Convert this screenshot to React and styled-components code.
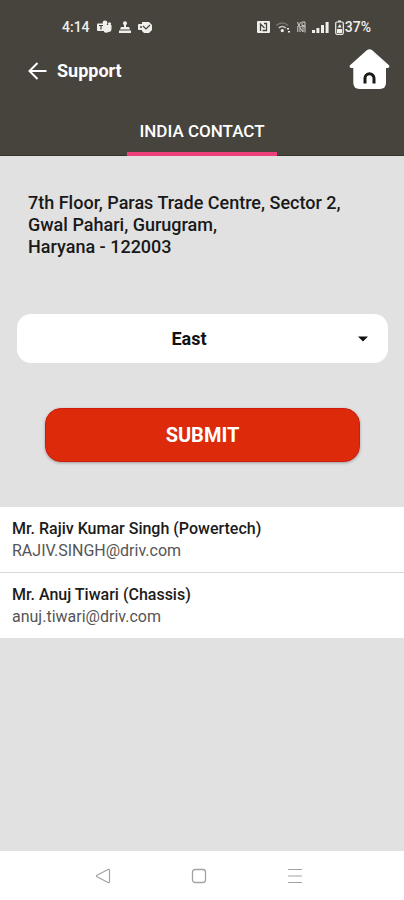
import React, { Component } from "react";
import styled, { createGlobalStyle } from "styled-components";

const GlobalStyle = createGlobalStyle`
  * {
    box-sizing: border-box;
  }
  body {
    margin: 0;
    background-color: #e1e1e1;
    font-family: Roboto, "Liberation Sans", sans-serif;
  }
`;

const Screen = styled.div`
  display: flex;
  flex-direction: column;
  min-height: 100vh;
`;

const Header = styled.header`
  background-color: #47443d;
  color: #ffffff;
`;

const StatusBar = styled.div`
  display: flex;
  align-items: center;
  justify-content: space-between;
  padding: 17px 33px 0 62px;
  font-size: 14px;
  font-weight: 500;
  line-height: 20px;
  color: #f0efec;
`;

const StatusGroup = styled.div`
  display: flex;
  align-items: center;
  gap: ${({ gap }) => gap}px;

  svg {
    display: block;
  }
`;

const Toolbar = styled.div`
  display: flex;
  align-items: center;
  justify-content: space-between;
  height: 68px;
  padding: 0 14px 0 27px;
`;

const TitleGroup = styled.div`
  display: flex;
  align-items: center;
  gap: 9px;
`;

const Title = styled.h1`
  margin: 0;
  font-size: 18px;
  font-weight: 700;
  line-height: 24px;
`;

const IconButton = styled.button`
  display: block;
  padding: 0;
  border: 0;
  background: none;
  color: inherit;
  cursor: pointer;

  svg {
    display: block;
  }
`;

const Tabs = styled.nav`
  display: flex;
  justify-content: center;
  border-bottom: 1px solid #35332e;
`;

const Tab = styled.button`
  width: 150px;
  height: 51px;
  margin-bottom: -1px;
  padding: 4px 0 0;
  border: 0;
  border-bottom: 4px solid #ee3f7a;
  background: none;
  color: #ffffff;
  font: 500 17px/20px Roboto, "Liberation Sans", sans-serif;
  cursor: pointer;
`;

const Main = styled.main`
  flex: 1;
`;

const Address = styled.address`
  padding: 36px 28px 0;
  color: #191919;
  font-size: 18px;
  font-style: normal;
  font-weight: 500;
  line-height: 22px;
`;

const Form = styled.form`
  display: flex;
  flex-direction: column;
  gap: 45px;
  padding: 56px 16px 45px 17px;
`;

const SelectField = styled.label`
  display: grid;
  align-items: center;

  > * {
    grid-area: 1 / 1;
  }

  svg {
    justify-self: end;
    margin-right: 20px;
    pointer-events: none;
  }
`;

const Select = styled.select`
  appearance: none;
  width: 100%;
  height: 49px;
  padding: 0 27px 0 0;
  border: 0;
  border-radius: 14px;
  background-color: #ffffff;
  color: #111111;
  font: 700 18px/24px Roboto, "Liberation Sans", sans-serif;
  text-align: center;
  text-align-last: center;
`;

const SubmitButton = styled.button`
  height: 54px;
  margin: 0 28px;
  border: 1px solid #d01c0e;
  border-radius: 16px;
  background-color: #dc2a0a;
  box-shadow: 0 1px 3px rgba(0, 0, 0, 0.3);
  color: #ffffff;
  font: 700 20px/24px Roboto, "Liberation Sans", sans-serif;
  cursor: pointer;
`;

const ContactList = styled.ul`
  margin: 0;
  padding: 0;
  list-style: none;
  background-color: #ffffff;
`;

const ContactItem = styled.li`
  padding: 11px 12px 10px;
  font-size: 16px;
  line-height: 22px;

  & + & {
    border-top: 1px solid #d9d9d9;
  }
`;

const ContactName = styled.div`
  color: #1b1b1b;
  font-weight: 500;
`;

const ContactMail = styled.a`
  display: block;
  color: #555555;
  text-decoration: none;
`;

const NavBar = styled.nav`
  display: flex;
  align-items: center;
  justify-content: center;
  gap: 80px;
  height: 49px;
  padding-right: 6px;
  background-color: #ffffff;
  color: #a3a3a3;
`;

const TeamsIcon = () => (
  <svg width="15" height="14" viewBox="0 0 15 14" fill="currentColor">
    <circle cx="8" cy="3" r="2.4" />
    <circle cx="12.5" cy="3.8" r="1.6" />
    <path d="M7 5h7.5v4a3 3 0 0 1-3 3A4 4 0 0 1 7 12z" />
    <rect x="0" y="3.5" width="8" height="7.5" rx="1" />
    <path d="M2 5.5h4M4 5.5v4" stroke="#47443d" strokeWidth="1.2" />
  </svg>
);

const StampIcon = () => (
  <svg width="12" height="12" viewBox="0 0 12 12" fill="currentColor">
    <circle cx="6" cy="2.2" r="2" />
    <path d="M5 3h2v3h3l1 2.5H1L2 6h3zM0 9.5h12V12H0z" />
  </svg>
);

const MailCheckIcon = () => (
  <svg width="14" height="12" viewBox="0 0 14 12" fill="currentColor">
    <path d="M4 1h7l3 3v5l-3 3H6L4 10z" />
    <rect x="0" y="3" width="7" height="6" rx="1" />
    <path d="M5 5l3 3 4-4" fill="none" stroke="#47443d" strokeWidth="1.2" />
    <circle cx="3" cy="6" r="1.2" fill="#77746d" />
  </svg>
);

const NfcIcon = () => (
  <svg width="13" height="12" viewBox="0 0 13 12">
    <rect width="13" height="12" rx="1" fill="currentColor" />
    <path
      d="M3.5 10V3l4 4M5.5 9.5h4v-7H7"
      fill="none"
      stroke="#47443d"
      strokeWidth="1.3"
    />
  </svg>
);

const WifiIcon = () => (
  <svg width="15" height="12" viewBox="0 0 15 12">
    <g fill="none" strokeWidth="1.6">
      <path d="M0.5 4.5a8 8 0 0 1 11.5 0" stroke="#77746d" />
      <path d="M2.8 7a5 5 0 0 1 7 0" stroke="#c9c7c2" />
    </g>
    <circle cx="6.3" cy="9.6" r="1.6" fill="currentColor" />
    <path d="M11 7h2v1.5h-2zM12 10h2v1.5h-2z" fill="currentColor" />
  </svg>
);

const VolteIcon = () => (
  <svg width="9" height="12" viewBox="0 0 9 12" fill="none" stroke="#cfcdc8">
    <path d="M0.5 1l1.5 4 1.5-4M5 1h3v3.5H5zM0.8 6.5V11M3 11V6.5l3 4.5V6.5M8 6v5.5M0 5.8h9" />
  </svg>
);

const SignalIcon = () => (
  <svg width="17" height="12" viewBox="0 0 17 12" fill="currentColor">
    <path d="M0 9h3v3H0zM4.4 7h3v5h-3zM9 4h3v8H9zM13.6 1h3v11h-3z" />
  </svg>
);

const BatteryIcon = () => (
  <svg width="9" height="15" viewBox="0 0 9 15">
    <path d="M3 0.5h3v1.5H3z" fill="currentColor" />
    <rect
      x="0.7"
      y="2"
      width="7.6"
      height="12.3"
      rx="1.2"
      fill="none"
      stroke="currentColor"
      strokeWidth="1.2"
    />
    <path d="M5 4L2.5 7.6h4z" fill="currentColor" />
    <path d="M2 9h5v4H2z" fill="currentColor" />
  </svg>
);

const BackArrow = () => (
  <svg
    width="21"
    height="20"
    viewBox="0 0 21 20"
    fill="none"
    stroke="currentColor"
    strokeWidth="2"
  >
    <path d="M10.5 2L2.5 10l8 8M2.5 10H19.5" />
  </svg>
);

const HomeIcon = () => (
  <svg width="41" height="44" viewBox="0 0 41 44">
    <path
      d="M17.8 1.3Q20.5-.6 23.2 1.3L40 16.2Q41.2 18.6 38.8 19H37v14.8Q37 40 30.8 40H10.5Q4.3 40 4.3 33.8V19H2.2Q-.2 18.6 1 16.2z"
      fill="#ffffff"
    />
    <path
      d="M16 34.5v-5.2a4.5 4.5 0 0 1 9 0v5.2"
      fill="none"
      stroke="#1c1b19"
      strokeWidth="3"
    />
  </svg>
);

const contacts = [
  { name: "Mr. Rajiv Kumar Singh (Powertech)", email: "RAJIV.SINGH@driv.com" },
  { name: "Mr. Anuj Tiwari (Chassis)", email: "anuj.tiwari@driv.com" }
];

const regions = ["East", "West", "North", "South"];

export default class App extends Component {
  state = {
    region: "East"
  };

  regionHandler = ({ target }) => {
    this.setState({ region: target.value });
  };

  render() {
    return (
      <>
        <GlobalStyle />
        <Screen>
          <Header>
            <StatusBar>
              <StatusGroup gap={7}>
                <span>4:14</span>
                <TeamsIcon />
                <StampIcon />
                <MailCheckIcon />
              </StatusGroup>
              <StatusGroup gap={6}>
                <NfcIcon />
                <WifiIcon />
                <VolteIcon />
                <SignalIcon />
                <StatusGroup gap={1}>
                  <BatteryIcon />
                  <span>37%</span>
                </StatusGroup>
              </StatusGroup>
            </StatusBar>
            <Toolbar>
              <TitleGroup>
                <IconButton type="button" aria-label="Back">
                  <BackArrow />
                </IconButton>
                <Title>Support</Title>
              </TitleGroup>
              <IconButton type="button" aria-label="Home">
                <HomeIcon />
              </IconButton>
            </Toolbar>
            <Tabs>
              <Tab type="button">INDIA CONTACT</Tab>
            </Tabs>
          </Header>
          <Main>
            <Address>
              7th Floor, Paras Trade Centre, Sector 2,
              <br />
              Gwal Pahari, Gurugram,
              <br />
              Haryana - 122003
            </Address>
            <Form onSubmit={event => event.preventDefault()}>
              <SelectField>
                <Select
                  aria-label="Region"
                  value={this.state.region}
                  onChange={this.regionHandler}
                >
                  {regions.map(region => (
                    <option key={region}>{region}</option>
                  ))}
                </Select>
                <svg width="10" height="6" viewBox="0 0 10 6">
                  <path d="M0 0.5h10L5 5.5z" fill="#111111" />
                </svg>
              </SelectField>
              <SubmitButton type="submit">SUBMIT</SubmitButton>
            </Form>
            <ContactList>
              {contacts.map(({ name, email }) => (
                <ContactItem key={email}>
                  <ContactName>{name}</ContactName>
                  <ContactMail href={`mailto:${email}`}>{email}</ContactMail>
                </ContactItem>
              ))}
            </ContactList>
          </Main>
          <NavBar>
            <IconButton type="button" aria-label="System back">
              <svg width="16" height="16" viewBox="0 0 16 16" fill="none">
                <path
                  d="M2 7.2L13 1.5Q14.5 1 14.5 2.5v11Q14.5 15 13 14.5L2 8.8Q.8 8 2 7.2z"
                  stroke="currentColor"
                  strokeWidth="1.2"
                />
              </svg>
            </IconButton>
            <IconButton type="button" aria-label="System home">
              <svg width="16" height="16" viewBox="0 0 16 16" fill="none">
                <rect
                  x="1.5"
                  y="1.5"
                  width="13"
                  height="13"
                  rx="2.5"
                  stroke="currentColor"
                  strokeWidth="1.3"
                />
              </svg>
            </IconButton>
            <IconButton type="button" aria-label="Recent apps">
              <svg width="16" height="16" viewBox="0 0 16 16" fill="none">
                <path
                  d="M1 1.5h14M1 8h14M1 14.5h14"
                  stroke="currentColor"
                  strokeWidth="1.2"
                />
              </svg>
            </IconButton>
          </NavBar>
        </Screen>
      </>
    );
  }
}
